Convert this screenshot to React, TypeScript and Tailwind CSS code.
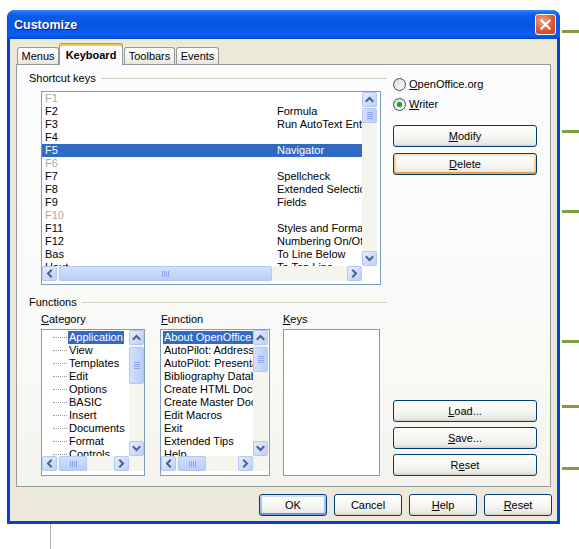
import React from "react";

type Dir = "up" | "down" | "left" | "right";

function Chevron({ dir }: { dir: Dir }) {
  const d = {
    up: "M1.5 6L4.5 3L7.5 6",
    down: "M1.5 3L4.5 6L7.5 3",
    left: "M6 1.5L3 4.5L6 7.5",
    right: "M3 1.5L6 4.5L3 7.5",
  }[dir];
  return (
    <svg width="9" height="9" viewBox="0 0 9 9">
      <path d={d} fill="none" stroke="#4d6185" strokeWidth="2" strokeLinecap="square" />
    </svg>
  );
}

function SBtn({ dir, cls }: { dir: Dir; cls: string }) {
  return (
    <div
      className={`flex shrink-0 items-center justify-center rounded-[2px] border border-[#b3c7f5] bg-[linear-gradient(135deg,#e6eefe,#bccffb)] ${cls}`}
    >
      <Chevron dir={dir} />
    </div>
  );
}

function VScroll({ thumb }: { thumb: string }) {
  return (
    <div className="flex w-[15px] shrink-0 flex-col bg-[#f5f4ef]">
      <SBtn dir="up" cls="h-[15px]" />
      <div
        className={`flex items-center justify-center rounded-[2px] border border-[#b3c7f5] bg-[linear-gradient(90deg,#d3e0fd,#b9cdf9)] ${thumb}`}
      >
        <div className="flex flex-col gap-px">
          <div className="h-px w-[6px] bg-[#8ca5e6]" />
          <div className="h-px w-[6px] bg-[#8ca5e6]" />
          <div className="h-px w-[6px] bg-[#8ca5e6]" />
          <div className="h-px w-[6px] bg-[#8ca5e6]" />
        </div>
      </div>
      <div className="flex-1" />
      <SBtn dir="down" cls="h-[15px]" />
    </div>
  );
}

function HScroll({ thumb, width }: { thumb: string; width: string }) {
  return (
    <div className={`flex h-[15px] shrink-0 bg-[#f5f4ef] ${width}`}>
      <SBtn dir="left" cls="w-[15px]" />
      <div
        className={`ml-[2px] flex items-center justify-center rounded-[2px] border border-[#b3c7f5] bg-[linear-gradient(180deg,#d3e0fd,#b9cdf9)] ${thumb}`}
      >
        <div className="flex gap-px">
          <div className="h-[6px] w-px bg-[#8ca5e6]" />
          <div className="h-[6px] w-px bg-[#8ca5e6]" />
          <div className="h-[6px] w-px bg-[#8ca5e6]" />
          <div className="h-[6px] w-px bg-[#8ca5e6]" />
        </div>
      </div>
      <div className="flex-1" />
      <SBtn dir="right" cls="w-[15px]" />
    </div>
  );
}

function Btn({
  children,
  cls = "",
  kind = "normal",
}: {
  children: React.ReactNode;
  cls?: string;
  kind?: "normal" | "hot" | "default";
}) {
  const k =
    kind === "hot"
      ? "shadow-[inset_0_2px_0_#fee7a5,inset_0_-2px_0_#eea23b,inset_2px_0_0_#fbd27b,inset_-2px_0_0_#fbd27b]"
      : kind === "default"
        ? "shadow-[inset_0_2px_0_#cde0fb,inset_0_-2px_0_#6f95e0,inset_2px_0_0_#a7c2f2,inset_-2px_0_0_#a7c2f2]"
        : "";
  return (
    <div
      className={`flex items-center justify-center rounded-[3px] border border-[#003c74] bg-[linear-gradient(#ffffff,#f4f4f0_60%,#ecebe6_85%,#d6d0c5)] leading-[13px] ${k} ${cls}`}
    >
      {children}
    </div>
  );
}

function Radio({ checked, children }: { checked?: boolean; children: React.ReactNode }) {
  return (
    <div className="flex h-[13px] items-center gap-[3px] leading-[13px]">
      <div className="flex h-[13px] w-[13px] items-center justify-center rounded-full border border-[#1c5180] bg-[linear-gradient(135deg,#d8d8d0,#ffffff)]">
        {checked && <div className="h-[5px] w-[5px] rounded-full bg-[#21a121] shadow-[0_0_1px_#5ccd5c]" />}
      </div>
      <span>{children}</span>
    </div>
  );
}

const shortcuts: { k: string; f: string; dis?: boolean; sel?: boolean }[] = [
  { k: "F1", f: "", dis: true },
  { k: "F2", f: "Formula" },
  { k: "F3", f: "Run AutoText Entry" },
  { k: "F4", f: "" },
  { k: "F5", f: "Navigator", sel: true },
  { k: "F6", f: "", dis: true },
  { k: "F7", f: "Spellcheck" },
  { k: "F8", f: "Extended Selection" },
  { k: "F9", f: "Fields" },
  { k: "F10", f: "", dis: true },
  { k: "F11", f: "Styles and Formatting" },
  { k: "F12", f: "Numbering On/Off" },
  { k: "Bas", f: "To Line Below" },
  { k: "Haut", f: "To Top Line" },
];

const categories = [
  "Application",
  "View",
  "Templates",
  "Edit",
  "Options",
  "BASIC",
  "Insert",
  "Documents",
  "Format",
  "Controls",
];

const functions = [
  "About OpenOffice.org",
  "AutoPilot: Address Data Source",
  "AutoPilot: Presentation",
  "Bibliography Database",
  "Create HTML Document",
  "Create Master Document",
  "Edit Macros",
  "Exit",
  "Extended Tips",
  "Help",
];

function Tab({ children, cls }: { children: React.ReactNode; cls: string }) {
  return (
    <div
      className={`flex h-[17px] items-center justify-center rounded-t-[3px] border border-b-0 border-[#919b9c] bg-[linear-gradient(#ffffff,#f3f2ec_70%,#e6e4da)] leading-[13px] ${cls}`}
    >
      {children}
    </div>
  );
}

export default function App() {
  return (
    <div className="flex h-[549px] w-[579px] flex-col overflow-hidden bg-white font-['Liberation_Sans',Arial,sans-serif] text-[11px] text-black">
      <div className="flex">
        {/* Window */}
        <div className="ml-[7px] mt-[10px] flex w-[553px] flex-col overflow-hidden rounded-t-[8px] bg-[#0b3ed2]">
          {/* Title bar */}
          <div className="flex h-[29px] items-center justify-between bg-[linear-gradient(180deg,#3d8cf7_0%,#1a6ef2_8%,#0a5ce8_20%,#0756e3_50%,#0859ec_70%,#0a5ef2_85%,#0550dc_95%,#0444c4_100%)] pl-[7px] pr-[4px]">
            <span className="pt-[2px] text-[12.5px] font-bold text-white [text-shadow:1px_1px_0_#0f1b8a]">
              Customize
            </span>
            <div className="flex h-[21px] w-[21px] items-center justify-center rounded-[3px] border border-white bg-[radial-gradient(circle_at_35%_30%,#f0a085,#e2582f_55%,#c2411b)]">
              <svg width="11" height="11" viewBox="0 0 11 11">
                <path d="M1.5 1.5L9.5 9.5M9.5 1.5L1.5 9.5" stroke="white" strokeWidth="2.2" strokeLinecap="square" />
              </svg>
            </div>
          </div>

          {/* Client */}
          <div className="mx-[3px] mb-[3px] flex flex-col bg-[#ece9d8] px-[6px] pt-[4px]">
            {/* Tabs */}
            <div className="flex h-[21px] items-end pl-[1px]">
              <Tab cls="w-[42px]">Menus</Tab>
              <div className="relative z-10 -mb-px flex h-[22px] w-[64px] items-center justify-center rounded-t-[3px] border border-b-0 border-[#919b9c] border-t-[#e68b2c] bg-[#fcfcfe] pt-[2px] font-bold leading-[13px] shadow-[inset_0_2px_0_#ffc83c]">
                Keyboard
              </div>
              <Tab cls="ml-[1px] w-[51px]">Toolbars</Tab>
              <Tab cls="ml-[1px] w-[43px]">Events</Tab>
            </div>

            {/* Panel */}
            <div className="flex h-[423px] border border-[#919b9c] bg-[linear-gradient(#fcfcfe,#f9f9f6_70%,#f4f3ee)] pl-[12px]">
              {/* Left column */}
              <div className="flex w-[358px] flex-col pt-[7px]">
                <div className="flex h-[13px] items-center leading-[13px]">
                  <span>Shortcut keys</span>
                  <div className="ml-[5px] h-px flex-1 bg-[#d0d0bf]" />
                </div>

                <div className="ml-[12px] mt-[6px] flex h-[194px] w-[340px] flex-col border border-[#7f9db9] bg-white">
                  <div className="flex h-[174px]">
                    <div className="w-[320px] overflow-hidden">
                      {shortcuts.map((r) => (
                        <div
                          key={r.k}
                          className={`flex h-[13px] whitespace-nowrap leading-[13px] ${
                            r.sel ? "bg-[#316ac5] text-white" : r.dis ? "text-[#aca899]" : ""
                          }`}
                        >
                          <span className="w-[235px] shrink-0 pl-[3px]">{r.k}</span>
                          <span>{r.f}</span>
                        </div>
                      ))}
                    </div>
                    <VScroll thumb="mt-px h-[15px]" />
                  </div>
                  <div className="flex h-[16px]">
                    <HScroll width="w-[320px]" thumb="w-[213px]" />
                    <div className="h-[15px] w-[15px] bg-white" />
                  </div>
                </div>

                <div className="mt-[11px] flex h-[13px] items-center leading-[13px]">
                  <span>Functions</span>
                  <div className="ml-[5px] h-px flex-1 bg-[#d0d0bf]" />
                </div>

                <div className="ml-[12px] mt-[4px] flex">
                  {/* Category */}
                  <div className="flex w-[104px] flex-col">
                    <span className="h-[13px] leading-[13px]">
                      <u>C</u>ategory
                    </span>
                    <div className="mt-[3px] flex h-[147px] flex-col border border-[#7f9db9] bg-white">
                      <div className="flex h-[126px]">
                        <div className="w-[87px] overflow-hidden pt-[1px]">
                          {categories.map((c, i) => (
                            <div key={c} className="flex h-[13px] items-center whitespace-nowrap leading-[13px]">
                              <div className="ml-[11px] w-[14px] shrink-0 border-t border-dotted border-[#9a9a9a]" />
                              <span
                                className={`ml-[1px] px-[1px] ${i === 0 ? "bg-[#316ac5] text-white" : ""}`}
                              >
                                {c}
                              </span>
                            </div>
                          ))}
                        </div>
                        <VScroll thumb="mt-[2px] h-[37px]" />
                      </div>
                      <div className="flex h-[16px]">
                        <HScroll width="w-[87px]" thumb="w-[28px]" />
                        <div className="h-[15px] w-[15px] bg-[#f5f4ef]" />
                      </div>
                    </div>
                  </div>

                  {/* Function */}
                  <div className="ml-[15px] flex w-[110px] flex-col">
                    <span className="h-[13px] pl-[1px] leading-[13px]">
                      <u>F</u>unction
                    </span>
                    <div className="mt-[3px] flex h-[147px] flex-col border border-[#7f9db9] bg-white">
                      <div className="flex h-[126px]">
                        <div className="w-[92px] overflow-hidden pt-[1px]">
                          {functions.map((f, i) => (
                            <div key={f} className="flex h-[13px] whitespace-nowrap leading-[13px]">
                              <span
                                className={`ml-[2px] px-[1px] ${i === 0 ? "bg-[#316ac5] text-white" : ""}`}
                              >
                                {f}
                              </span>
                            </div>
                          ))}
                        </div>
                        <VScroll thumb="mt-[2px] h-[25px]" />
                      </div>
                      <div className="flex h-[16px]">
                        <HScroll width="w-[92px]" thumb="w-[28px]" />
                        <div className="h-[15px] w-[15px] bg-[#f5f4ef]" />
                      </div>
                    </div>
                  </div>

                  {/* Keys */}
                  <div className="ml-[13px] flex w-[97px] flex-col">
                    <span className="h-[13px] leading-[13px]">
                      <u>K</u>eys
                    </span>
                    <div className="mt-[3px] h-[147px] border border-[#7f9db9] bg-white" />
                  </div>
                </div>
              </div>

              {/* Right column */}
              <div className="ml-[6px] flex w-[144px] flex-col pt-[13px]">
                <Radio>
                  <u>O</u>penOffice.org
                </Radio>
                <div className="mt-[7px]">
                  <Radio checked>
                    <u>W</u>riter
                  </Radio>
                </div>
                <Btn cls="mt-[14px] h-[22px]">
                  <u>M</u>odify
                </Btn>
                <Btn cls="mt-[6px] h-[22px]" kind="hot">
                  <u>D</u>elete
                </Btn>
                <Btn cls="mt-[225px] h-[22px]">
                  <u>L</u>oad...
                </Btn>
                <Btn cls="mt-[5px] h-[22px]">
                  <u>S</u>ave...
                </Btn>
                <Btn cls="mt-[5px] h-[22px]">
                  R<u>e</u>set
                </Btn>
              </div>
            </div>

            {/* Bottom buttons */}
            <div className="-mr-px mb-[5px] mt-[7px] flex justify-end gap-[7px]">
              <Btn cls="h-[22px] w-[68px]" kind="default">
                OK
              </Btn>
              <Btn cls="h-[22px] w-[68px]">Cancel</Btn>
              <Btn cls="h-[22px] w-[68px]">
                <u>H</u>elp
              </Btn>
              <Btn cls="h-[22px] w-[68px]">
                <u>R</u>eset
              </Btn>
            </div>
          </div>
        </div>

        {/* Right gutter green marks */}
        <div className="flex w-[19px] flex-col pl-[2px]">
          <div className="mt-[30px] h-[3px] bg-[#7ea03c]" />
          <div className="mt-[97px] h-[3px] bg-[#7ea03c]" />
          <div className="mt-[77px] h-[3px] bg-[#7ea03c]" />
          <div className="mt-[127px] h-[3px] bg-[#7ea03c]" />
          <div className="mt-[62px] h-[3px] bg-[#7ea03c]" />
          <div className="mt-[59px] h-[3px] bg-[#7ea03c]" />
        </div>
      </div>
      <div className="ml-[50px] h-[25px] w-px bg-[#b4b4b4]" />
    </div>
  );
}
